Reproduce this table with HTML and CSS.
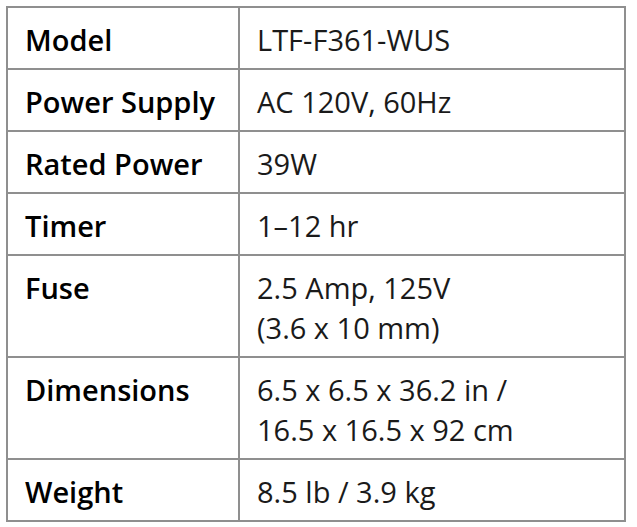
FILE: index.html
```html
<!DOCTYPE html>
<html>
<head>
<meta charset="utf-8">
<link rel="stylesheet" href="styles.css">
</head>
<body>
<table class="specs">
  <tr><th>Model</th><td>LTF-F361-WUS</td></tr>
  <tr><th>Power Supply</th><td>AC 120V, 60Hz</td></tr>
  <tr><th>Rated Power</th><td>39W</td></tr>
  <tr><th>Timer</th><td>1–12 hr</td></tr>
  <tr><th>Fuse</th><td>2.5 Amp, 125V<br>(3.6 x 10 mm)</td></tr>
  <tr><th>Dimensions</th><td>6.5 x 6.5 x 36.2 in /<br>16.5 x 16.5 x 92 cm</td></tr>
  <tr><th>Weight</th><td>8.5 lb / 3.9 kg</td></tr>
</table>
</body>
</html>
```
FILE: styles.css
```css
html, body {
  margin: 0;
  background: #ffffff;
}
body {
  padding: 6px;
  font-family: "Open Sans", "Liberation Sans", sans-serif;
}
.specs {
  border-collapse: collapse;
  width: 620px;
}
.specs th, .specs td {
  border: 2px solid #8f8f8f;
  padding: 12px 17px 8px;
  font-size: 29px;
  line-height: 40px;
  text-align: left;
  vertical-align: top;
}
.specs th {
  width: 196px;
  font-weight: 600;
  color: #000;
}
.specs td {
  font-weight: 400;
  color: #1a1a1a;
}
```
